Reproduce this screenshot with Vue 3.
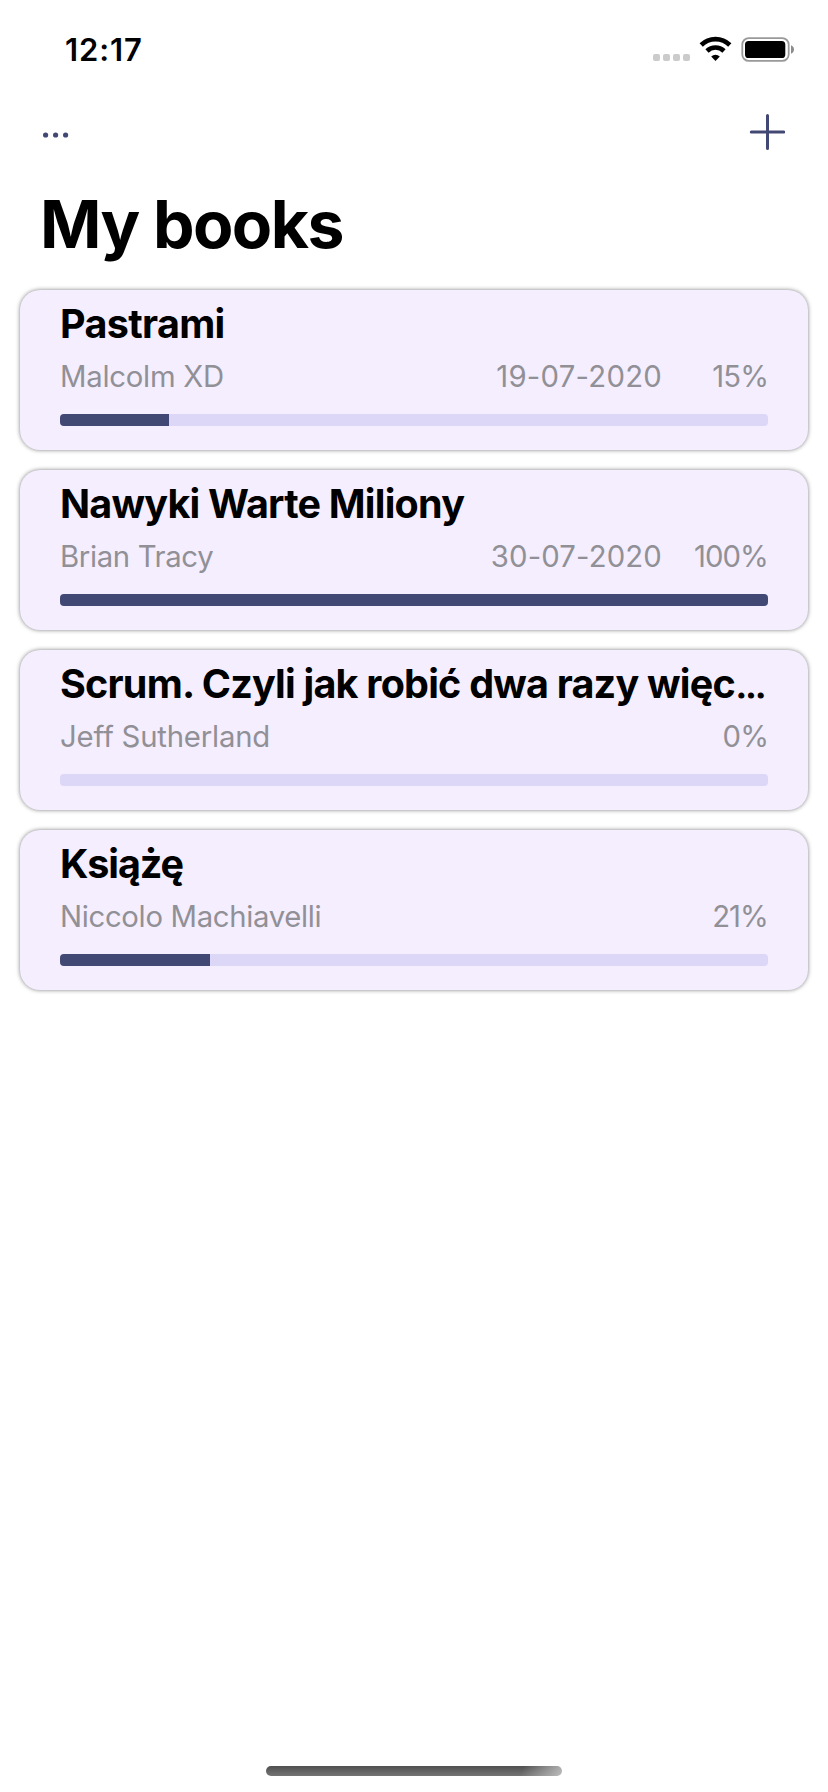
<script setup>
const books = [
  { title: 'Pastrami', author: 'Malcolm XD', date: '19-07-2020', percent: '15%', fill: 15.4, titleTracking: -0.65, authorTracking: -0.25, dateTracking: 0.25 },
  { title: 'Nawyki Warte Miliony', author: 'Brian Tracy', date: '30-07-2020', percent: '100%', fill: 100, titleTracking: -0.78, authorTracking: -0.35, dateTracking: 0.15 },
  { title: 'Scrum. Czyli jak robić dwa razy więc', cut: true, author: 'Jeff Sutherland', date: '', percent: '0%', fill: 0, titleTracking: -0.78, authorTracking: -0.2, dateTracking: 0 },
  { title: 'Książę', author: 'Niccolo Machiavelli', date: '', percent: '21%', fill: 21.2, titleTracking: -1.1, authorTracking: -0.32, dateTracking: 0 },
]
</script>

<template>
  <div class="screen">
    <header class="status">
      <span class="time">12:17</span>
      <svg class="indicators" width="144" height="30" viewBox="0 0 144 30">
        <g fill="#cbcbcb">
          <rect x="3" y="20" width="7" height="7" rx="2" />
          <rect x="13" y="20" width="7" height="7" rx="2" />
          <rect x="23" y="20" width="7" height="7" rx="2" />
          <rect x="33" y="20" width="7" height="7" rx="2" />
        </g>
        <g fill="none" stroke="#000" stroke-width="4.6">
          <path d="M51.2 11 A20.3 20.3 0 0 1 79.8 11" />
          <path d="M57 17 A12.2 12.2 0 0 1 74 17" />
        </g>
        <path d="M65.5 27 L61.2 22.6 A6.2 6.2 0 0 1 69.8 22.6 Z" fill="#000" />
        <rect x="92.3" y="4.1" width="46.4" height="22.8" rx="6.5" fill="none" stroke="#999" stroke-width="1.8" />
        <rect x="95" y="7" width="40.3" height="17" rx="3.6" fill="#000" />
        <path d="M141 11.3 C145 12.5 145 18.5 141 19.7 Z" fill="#8c8c8c" />
      </svg>
    </header>

    <nav class="toolbar">
      <svg width="28" height="8" viewBox="0 0 28 8" fill="#424874">
        <circle cx="3.6" cy="4" r="2.6" />
        <circle cx="13.6" cy="4" r="2.6" />
        <circle cx="23.6" cy="4" r="2.6" />
      </svg>
      <svg class="plus" width="36" height="36" viewBox="0 0 36 36">
        <path d="M18.5 1.5 V34.5 M2.3 18 H34.7" stroke="#424874" stroke-width="3" stroke-linecap="round" />
      </svg>
    </nav>

    <h1>My books</h1>

    <main class="list">
      <article v-for="book in books" :key="book.title" class="card">
        <h2 :style="{ letterSpacing: book.titleTracking + 'px' }">{{ book.title }}<span v-if="book.cut" class="ellipsis">…</span></h2>
        <div class="meta">
          <span class="author" :style="{ letterSpacing: book.authorTracking + 'px' }">{{ book.author }}</span>
          <span class="date" :style="{ letterSpacing: book.dateTracking + 'px' }">{{ book.date }}</span>
          <span class="percent">{{ book.percent }}</span>
        </div>
        <div class="track"><div class="fill" :style="{ width: book.fill + '%' }"></div></div>
      </article>
    </main>

    <footer class="home"><div class="home-bar"></div></footer>
  </div>
</template>

<style>
body { background: #fff; }
</style>

<style scoped>
.screen {
  box-sizing: border-box;
  width: 828px;
  height: 1792px;
  display: flex;
  flex-direction: column;
  overflow: hidden;
  background: #fff;
  font-family: Inter, "Liberation Sans", sans-serif;
  color: #000;
}
.status {
  height: 88px;
  box-sizing: border-box;
  padding: 34px 34px 0 65px;
  display: flex;
  justify-content: space-between;
  align-items: flex-start;
}
.time { font-size: 31px; line-height: 32px; font-weight: 600; letter-spacing: 0.9px; }
.indicators { display: block; }
.toolbar {
  height: 88px;
  box-sizing: border-box;
  padding: 0 43px 0 42px;
  display: flex;
  justify-content: space-between;
  align-items: center;
}
.toolbar svg:first-child { margin-top: 6px; }
h1 {
  margin: 0;
  padding-left: 40px;
  height: 114px;
  font-size: 66px;
  line-height: 96px;
  font-weight: 700;
  letter-spacing: -1.55px;
}
.list { display: flex; flex-direction: column; gap: 20px; padding: 0 20px; }
.card {
  box-sizing: border-box;
  height: 160px;
  padding: 10px 40px 0;
  border-radius: 20px;
  background: #f4eeff;
  box-shadow: 0 0 4px rgba(0, 0, 0, 0.5);
}
h2 {
  margin: 0;
  height: 48px;
  font-size: 39.5px;
  line-height: 48px;
  font-weight: 700;
  white-space: nowrap;
}
.ellipsis {
  margin-left: 1.5px;
  font-size: 29px;
  line-height: 1;
  -webkit-text-stroke: 1.2px #000;
}
.meta {
  display: flex;
  margin-top: 11px;
  font-size: 29.3px;
  line-height: 36px;
  color: #919096;
  white-space: nowrap;
}
.author { flex: 1; }
.percent { width: 106px; text-align: right; letter-spacing: -0.9px; }
.track { margin-top: 19px; height: 12px; border-radius: 4px; overflow: hidden; background: #dcd6f7; }
.fill { height: 12px; background: #424874; }
.home { margin-top: auto; height: 26px; display: flex; justify-content: center; }
.home-bar {
  width: 296px;
  height: 10px;
  border-radius: 5px;
  background:
    linear-gradient(110deg, transparent 86%, rgba(200, 200, 200, 0.85) 100%),
    linear-gradient(#505050, #747474);
}
</style>
